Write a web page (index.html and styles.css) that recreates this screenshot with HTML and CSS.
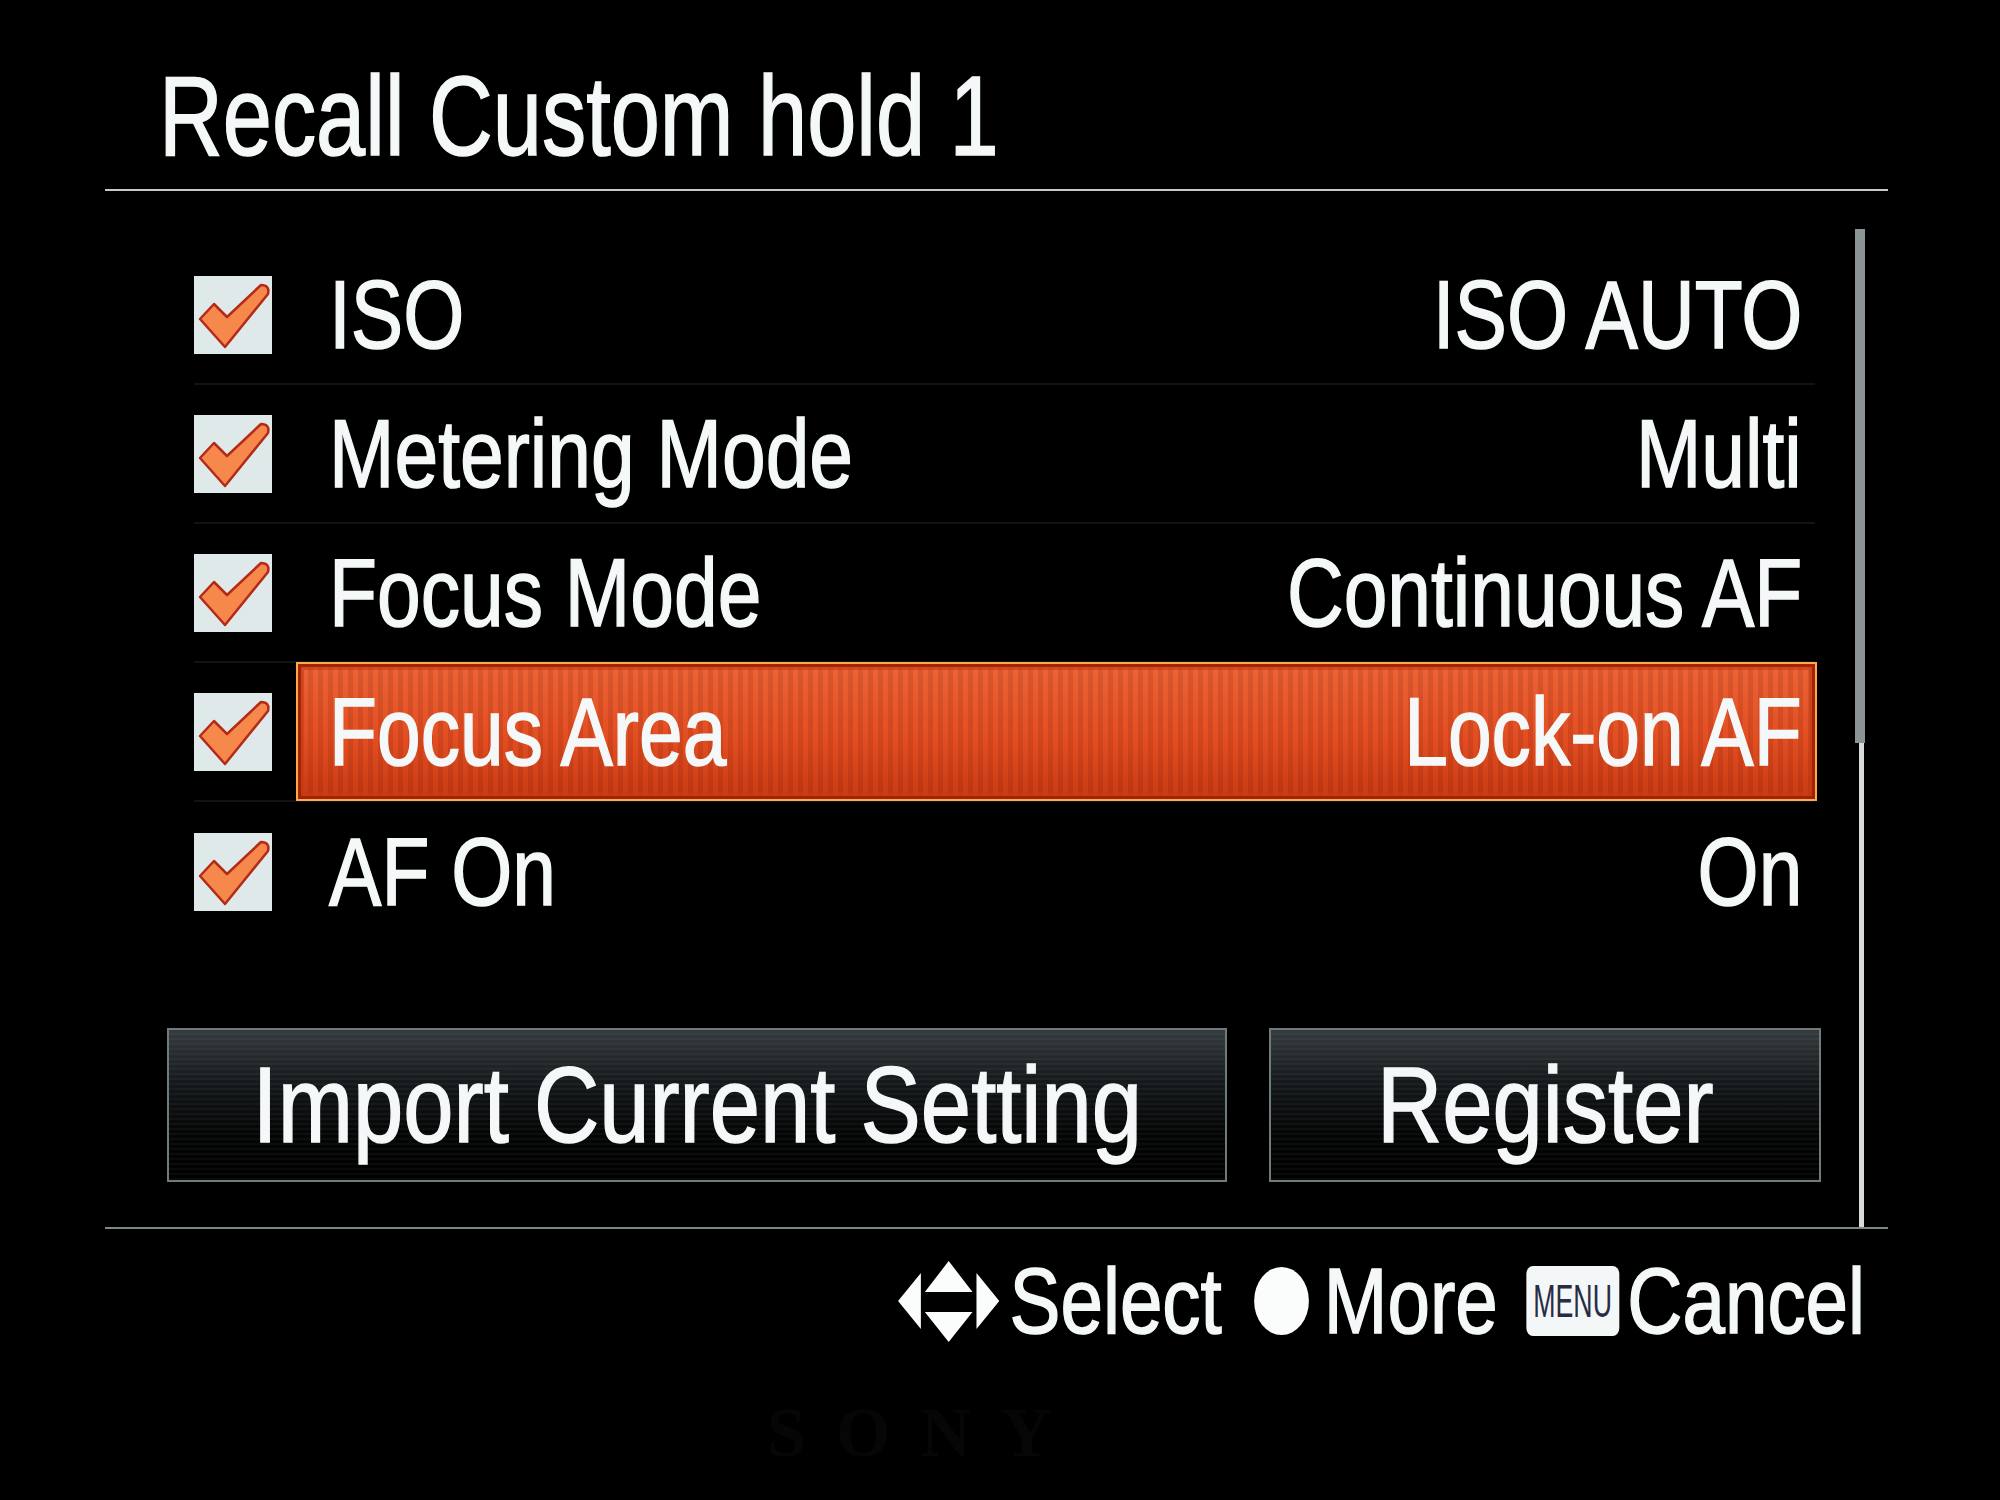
FILE: index.html
```html
<!DOCTYPE html>
<html lang="en">
<head>
<meta charset="utf-8"/>
<title>Recall Custom hold 1</title>
<link rel="stylesheet" href="styles.css">
</head>
<body>
<div class="panel">
  <h1 class="title"><span>Recall Custom hold 1</span></h1>
  <div class="rule"></div>

  <div class="main">
    <div class="content">
      <div class="row">
        <svg class="check" viewBox="0 0 78 78"><rect width="78" height="78" fill="#dfe9e9"/><path d="M6 43 L20 28 L33 41 L67 9 Q76 9 74 18 L31 71 Z" fill="#f7884c" stroke="#b42a18" stroke-width="2.5" stroke-linejoin="round"/></svg>
        <div class="cell"><span class="lbl">ISO</span><span class="val">ISO AUTO</span></div>
      </div>
      <div class="row">
        <svg class="check" viewBox="0 0 78 78"><rect width="78" height="78" fill="#dfe9e9"/><path d="M6 43 L20 28 L33 41 L67 9 Q76 9 74 18 L31 71 Z" fill="#f7884c" stroke="#b42a18" stroke-width="2.5" stroke-linejoin="round"/></svg>
        <div class="cell"><span class="lbl">Metering Mode</span><span class="val">Multi</span></div>
      </div>
      <div class="row">
        <svg class="check" viewBox="0 0 78 78"><rect width="78" height="78" fill="#dfe9e9"/><path d="M6 43 L20 28 L33 41 L67 9 Q76 9 74 18 L31 71 Z" fill="#f7884c" stroke="#b42a18" stroke-width="2.5" stroke-linejoin="round"/></svg>
        <div class="cell"><span class="lbl">Focus Mode</span><span class="val">Continuous AF</span></div>
      </div>
      <div class="row">
        <svg class="check" viewBox="0 0 78 78"><rect width="78" height="78" fill="#dfe9e9"/><path d="M6 43 L20 28 L33 41 L67 9 Q76 9 74 18 L31 71 Z" fill="#f7884c" stroke="#b42a18" stroke-width="2.5" stroke-linejoin="round"/></svg>
        <div class="cell selected"><span class="lbl">Focus Area</span><span class="val">Lock-on AF</span></div>
      </div>
      <div class="row">
        <svg class="check" viewBox="0 0 78 78"><rect width="78" height="78" fill="#dfe9e9"/><path d="M6 43 L20 28 L33 41 L67 9 Q76 9 74 18 L31 71 Z" fill="#f7884c" stroke="#b42a18" stroke-width="2.5" stroke-linejoin="round"/></svg>
        <div class="cell"><span class="lbl">AF On</span><span class="val">On</span></div>
      </div>

      <div class="buttons">
        <div class="btn btn-import"><span>Import Current Setting</span></div>
        <div class="btn btn-register"><span>Register</span></div>
      </div>
    </div>
    <div class="scroll">
      <div class="thumb"></div>
      <div class="track"></div>
    </div>
  </div>

  <div class="rule rule-bottom"></div>

  <div class="guide">
    <svg class="arrows" viewBox="0 0 102 82" preserveAspectRatio="none"><path d="M0 41 L23 13 L23 69 Z M79 13 L102 41 L79 69 Z M51 1 L75 32 L27 32 Z M27 52 L75 52 L51 82 Z" fill="#fbfcfc"/></svg>
    <span class="g-select">Select</span>
    <span class="dot"></span>
    <span class="g-more">More</span>
    <span class="menu-key"><span>MENU</span></span>
    <span class="g-cancel">Cancel</span>
  </div>

  <div class="brand">SONY</div>
</div>
</body>
</html>
```

FILE: styles.css
```css
body {
  margin: 0;
  background: #000;
  color: #f5f8f8;
  font-family: "Liberation Sans", Arial, sans-serif;
  width: 2000px;
  height: 1500px;
  overflow: hidden;
}
/* the camera font is a narrow, slightly heavy grotesque, so the text is squeezed */
.panel {
  margin-left: 105px;
  width: 1783px;
}
.title {
  margin: 0;
  padding: 59px 0 0 54px;
  font-size: 114px;
  line-height: 114px;
  font-weight: normal;
  white-space: nowrap;
  -webkit-text-stroke: 1.5px #f5f8f8;
}
.title span {
  display: inline-block;
  transform: scaleX(0.775);
  transform-origin: left center;
}
.rule {
  margin-top: 16px;
  height: 2px;
  background: #c4caca;
}
.rule-bottom {
  margin-top: 0;
  background: #7c8888;
}

.main {
  display: flex;
}
.content {
  width: 1720px;
  padding: 55px 0 45px;
}
.row {
  display: flex;
  align-items: center;
  height: 139px;
  margin-left: 89px;
  width: 1621px;
  box-sizing: border-box;
  border-bottom: 2px solid #111414;
}
.row:nth-child(5) {
  border-bottom: none;
}
.check {
  width: 78px;
  height: 78px;
  flex-shrink: 0;
}
.cell {
  margin-left: 26px;
  width: 1517px;
  height: 135px;
  box-sizing: border-box;
  padding: 0 13px 0 31px;
  display: flex;
  justify-content: space-between;
  align-items: center;
  font-size: 97px;
  line-height: 97px;
  white-space: nowrap;
  -webkit-text-stroke: 1.5px #f5f8f8;
}
.lbl, .val {
  display: inline-block;
  transform: scaleX(0.81);
}
.lbl {
  transform-origin: left center;
}
.val {
  transform-origin: right center;
}
.selected {
  background:
    repeating-linear-gradient(90deg, rgba(90, 10, 0, 0.13) 0 5px, transparent 5px 10px),
    linear-gradient(#ec6436, #e24e22 55%, #c83a12);
  box-shadow: 0 0 0 2px #ffa84c, inset 0 0 0 3px #a0240a, inset 0 0 0 6px rgba(200, 60, 20, 0.6);
}

.buttons {
  display: flex;
  gap: 42px;
  margin: 87px 0 0 62px;
}
.btn {
  height: 154px;
  box-sizing: border-box;
  border: 2px solid #6f7a7a;
  display: flex;
  align-items: center;
  justify-content: center;
  font-size: 107px;
  white-space: nowrap;
  -webkit-text-stroke: 1.5px #f5f8f8;
  background:
    repeating-linear-gradient(0deg, rgba(255, 255, 255, 0.035) 0 2px, transparent 2px 5px),
    linear-gradient(#353b3e, #15191b 35%, #040505 70%, #000);
}
.btn span {
  display: inline-block;
  transform: scaleX(0.845);
}
.btn-import {
  width: 1060px;
}
.btn-register {
  width: 552px;
}

.scroll {
  margin: 38px 0 0 30px;
  display: flex;
  flex-direction: column;
}
.thumb {
  width: 10px;
  height: 514px;
  background: #8a9494;
}
.track {
  flex: 1;
  width: 5px;
  margin-left: 4px;
  background: #d6dcdc;
}

/* whole guide line is squeezed from the right edge; sizes below are pre-scale */
.guide {
  display: flex;
  align-items: center;
  justify-content: flex-end;
  margin: 26px 23px 0 0;
  font-size: 92px;
  line-height: 92px;
  white-space: nowrap;
  -webkit-text-stroke: 1.5px #f5f8f8;
  transform: scaleX(0.83);
  transform-origin: right center;
}
.arrows {
  width: 122px;
  height: 82px;
  margin-right: 12px;
}
.dot {
  width: 66px;
  height: 68px;
  border-radius: 50%;
  background: #fbfcfc;
  margin: 0 18px 0 39px;
}
.menu-key {
  width: 112px;
  height: 70px;
  border-radius: 8px;
  background: #f4f7f7;
  margin: 0 10px 0 34px;
  display: flex;
  align-items: center;
  justify-content: center;
  overflow: hidden;
  -webkit-text-stroke: 0;
}
.menu-key span {
  color: #2a2c44;
  font-size: 46px;
  transform: scaleX(0.7);
}

.brand {
  margin: 51px 0 0 662px;
  font-family: "Liberation Serif", serif;
  font-weight: bold;
  font-size: 70px;
  line-height: 70px;
  letter-spacing: 30px;
  color: #070606;
}
```
